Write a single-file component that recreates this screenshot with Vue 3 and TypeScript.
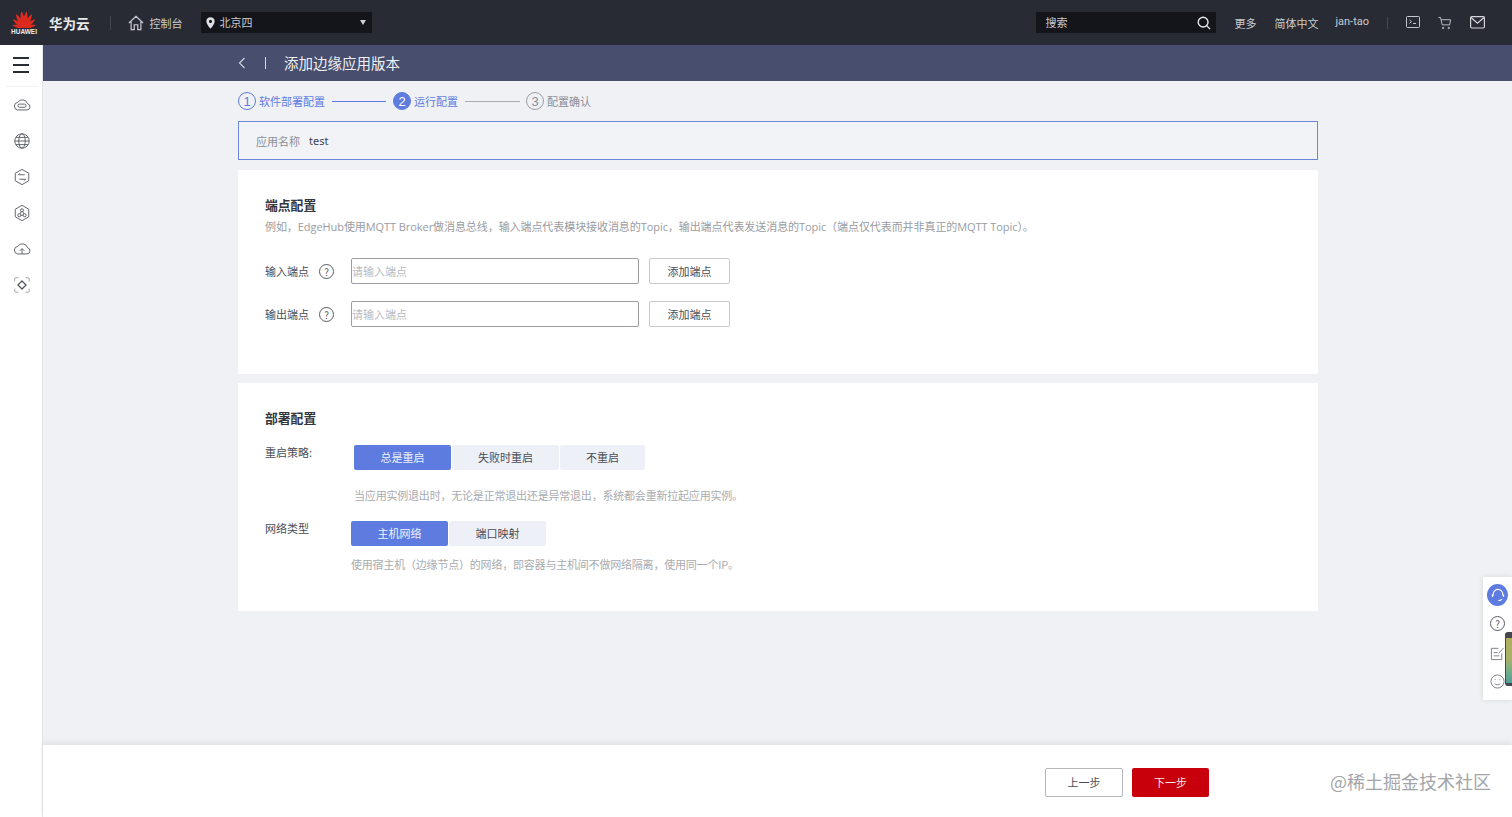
<template>
  <div class="page">
    <header class="top-bar">
      <div class="brand">
        <svg class="logo" viewBox="0 0 24 18" width="24" height="18">
          <path
            v-for="petal in petals"
            :key="petal.angle"
            fill="#dc2a1f"
            d="M12 18 C9.400 13 9.400 6 12 1 C14.600 6 14.600 13 12 18Z"
            :transform="`rotate(${petal.angle} 12 18) translate(12 18) scale(${petal.scale}) translate(-12 -18)`"
          />
        </svg>
        <span class="logo-text">HUAWEI</span>
      </div>
      <span class="brand-name">华为云</span>
      <span class="divider first"></span>
      <svg class="home" viewBox="0 0 18 18" width="16" height="16" fill="none" stroke="#cdcfd4" stroke-width="1.300">
        <path d="M1 9 9 1.500 17 9M3.500 7.500V16.500H7V11H11V16.500H14.500V7.500" />
      </svg>
      <span class="nav-text console">控制台</span>
      <div class="region">
        <svg viewBox="0 0 10 13" width="9" height="12">
          <path fill="#dfe0e3" fill-rule="evenodd" d="M5 0a4.600 4.600 0 0 1 4.600 4.600C9.600 8 5 13 5 13S.4 8 .4 4.600A4.600 4.600 0 0 1 5 0Zm0 3a1.700 1.700 0 1 0 0 3.400A1.700 1.700 0 0 0 5 3Z" />
        </svg>
        <span>北京四</span>
        <i class="caret"></i>
      </div>
      <div class="spacer"></div>
      <div class="search">
        <span>搜索</span>
        <svg viewBox="0 0 16 16" width="14" height="14" fill="none" stroke="#e8e8e8" stroke-width="1.600">
          <circle cx="7" cy="7" r="5.600" />
          <path d="m11 11 4 4" />
        </svg>
      </div>
      <span class="nav-text more">更多</span>
      <span class="nav-text lang">简体中文</span>
      <span class="nav-text user">jan-tao</span>
      <span class="divider second"></span>
      <svg class="tool" viewBox="0 0 14 13" width="14" height="13" fill="none" stroke="#c4c6cc">
        <rect x=".5" y=".5" width="13" height="11" rx="1" />
        <path d="m3.500 4 2 1.700-2 1.700M7 7.500h3" />
      </svg>
      <svg class="tool" viewBox="0 0 15 14" width="14" height="14" fill="none" stroke="#c4c6cc">
        <path d="M.5 1h2.200l1.800 8h8l1-5.500H3.400" />
        <circle cx="5.500" cy="12.300" r=".8" />
        <circle cx="11.500" cy="12.300" r=".8" />
      </svg>
      <svg class="tool" viewBox="0 0 15 13" width="15" height="13" fill="none" stroke="#d4d5d9" stroke-width="1.200">
        <rect x=".6" y=".6" width="13.800" height="11.400" rx="1.200" />
        <path d="m1 1.500 6.500 5.600L14 1.500" />
      </svg>
    </header>

    <div class="body">
      <aside class="side">
        <div class="burger"><i></i><i></i><i></i></div>
        <div class="side-icons">
          <svg viewBox="0 0 20 20" width="18" height="18" fill="none" stroke="#55585f">
            <path d="M5 15.500h10.500a3.500 3.500 0 0 0 .7-6.900A6 6 0 0 0 5.400 7 4.300 4.300 0 0 0 5 15.500Z" />
            <rect x="5.500" y="9" width="9" height="3.500" rx="1.700" />
          </svg>
          <svg viewBox="0 0 20 20" width="18" height="18" fill="none" stroke="#55585f">
            <circle cx="10" cy="10" r="8" />
            <ellipse cx="10" cy="10" rx="3.600" ry="8" />
            <path d="M2 10h16M3.200 6h13.600M3.200 14h13.600" />
          </svg>
          <svg viewBox="0 0 20 20" width="18" height="18" fill="none" stroke="#55585f">
            <path d="M10 1.500 17.500 5.800v8.400L10 18.500l-7.500-4.300V5.800Z" />
            <path d="M6 7.500h7M14 12.500H7M6 7.500l1.500-1.500M14 12.500l-1.500 1.500" />
          </svg>
          <svg viewBox="0 0 20 20" width="18" height="18" fill="none" stroke="#55585f">
            <path d="M10 1.500 17.500 5.800v8.400L10 18.500l-7.500-4.300V5.800Z" />
            <circle cx="10" cy="7" r="1.700" />
            <circle cx="7" cy="12.500" r="1.700" />
            <circle cx="13" cy="12.500" r="1.700" />
            <path d="M9.200 8.500 7.900 11M10.800 8.500l1.300 2.500M8.700 12.500h2.600" />
          </svg>
          <svg viewBox="0 0 20 20" width="18" height="18" fill="none" stroke="#55585f">
            <path d="M5 15.500h10.500a3.500 3.500 0 0 0 .7-6.900A6 6 0 0 0 5.400 7 4.300 4.300 0 0 0 5 15.500Z" />
            <path d="M10 15.500V10M7.500 12 10 9.500l2.500 2.500" />
          </svg>
          <svg viewBox="0 0 20 20" width="18" height="18" fill="none" stroke="#55585f">
            <path stroke="#9a9ca2" d="M2 6V3a1 1 0 0 1 1-1h3M14 2h3a1 1 0 0 1 1 1v3M18 14v3a1 1 0 0 1-1 1h-3M6 18H3a1 1 0 0 1-1-1v-3" />
            <path stroke-width="1.400" d="m10 5.500 4.500 4.500-4.500 4.500L5.500 10Z" />
          </svg>
        </div>
      </aside>

      <main class="main">
        <div class="sub-bar">
          <svg viewBox="0 0 8 12" width="8" height="12" fill="none" stroke="#d5d8e4" stroke-width="1.100">
            <path d="M6.500 1 1.500 6l5 5" />
          </svg>
          <span class="sub-line"></span>
          <span class="sub-title">添加边缘应用版本</span>
        </div>

        <div class="content">
          <div class="steps">
            <div class="step done"><b>1</b><span>软件部署配置</span></div>
            <i class="step-line on"></i>
            <div class="step current"><b>2</b><span>运行配置</span></div>
            <i class="step-line off"></i>
            <div class="step todo"><b>3</b><span>配置确认</span></div>
          </div>

          <div class="app-name">
            <span class="app-label">应用名称</span>
            <span class="app-value">test</span>
          </div>

          <section class="card endpoint-card">
            <h3>端点配置</h3>
            <p class="desc">例如，EdgeHub使用MQTT Broker做消息总线，输入端点代表模块接收消息的Topic，输出端点代表发送消息的Topic（端点仅代表而并非真正的MQTT Topic）。</p>
            <div v-for="row in endpointRows" :key="row" class="endpoint-row">
              <span class="row-label">{{ row }}</span>
              <span class="help">?</span>
              <div class="fake-input">请输入端点</div>
              <button class="add-btn">添加端点</button>
            </div>
          </section>

          <section class="card deploy-card">
            <h3>部署配置</h3>
            <div class="option-row restart">
              <span class="option-label">重启策略:</span>
              <div class="option-body">
                <div class="segments">
                  <button v-for="(item, i) in restartOptions" :key="item.text" :class="['seg', { active: i === 0 }]" :style="{ width: item.width + 'px' }">{{ item.text }}</button>
                </div>
                <p class="hint">当应用实例退出时，无论是正常退出还是异常退出，系统都会重新拉起应用实例。</p>
              </div>
            </div>
            <div class="option-row network">
              <span class="option-label">网络类型</span>
              <div class="option-body">
                <div class="segments">
                  <button v-for="(item, i) in networkOptions" :key="item.text" :class="['seg', { active: i === 0 }]" :style="{ width: item.width + 'px' }">{{ item.text }}</button>
                </div>
                <p class="hint">使用宿主机（边缘节点）的网络，即容器与主机间不做网络隔离，使用同一个IP。</p>
              </div>
            </div>
          </section>
        </div>

        <footer class="footer">
          <button class="btn prev">上一步</button>
          <button class="btn next">下一步</button>
          <span class="watermark">@稀土掘金技术社区</span>
        </footer>
      </main>
    </div>

    <div class="float-panel">
      <span class="support">
        <svg viewBox="0 0 20 20" width="16" height="16" fill="none" stroke="#fff" stroke-width="1.400">
          <path d="M4 11V9a6 6 0 0 1 12 0v2M3 9.500v3M17 9.500v3M15 15c-1 1.500-2.500 2-4.500 2" />
        </svg>
      </span>
      <span class="float-help">?</span>
      <svg class="float-doc" viewBox="0 0 16 16" width="15" height="15" fill="none" stroke="#7c7e84">
        <path d="M12.500 8v6.500h-11v-12H9M4 7h4M4 10.500h6M9 8l5.500-6" />
      </svg>
      <svg class="float-smile" viewBox="0 0 16 16" width="15" height="15" fill="none" stroke="#7c7e84">
        <circle cx="8" cy="8" r="7" />
        <path d="M5 6h1M10 6h1M5 10.500c1.500 1.400 4.500 1.400 6 0" />
      </svg>
    </div>
    <div class="meter"><i></i></div>
  </div>
</template>

<script setup lang="ts">
interface SegmentOption {
  text: string
  width: number
}

interface Petal {
  angle: number
  scale: number
}

const petals: Petal[] = [
  { angle: -76, scale: 0.72 },
  { angle: -52, scale: 0.84 },
  { angle: -30, scale: 0.95 },
  { angle: -9, scale: 1 },
  { angle: 9, scale: 1 },
  { angle: 30, scale: 0.95 },
  { angle: 52, scale: 0.84 },
  { angle: 76, scale: 0.72 }
]

const endpointRows = ['输入端点', '输出端点']

const restartOptions: SegmentOption[] = [
  { text: '总是重启', width: 97 },
  { text: '失败时重启', width: 107 },
  { text: '不重启', width: 85 }
]

const networkOptions: SegmentOption[] = [
  { text: '主机网络', width: 97 },
  { text: '端口映射', width: 97 }
]
</script>

<style>
html,
body {
  margin: 0;
  overflow: hidden;
}
</style>

<style scoped>
.page {
  position: relative;
  display: flex;
  flex-direction: column;
  height: 817px;
  overflow: hidden;
  font-family: "Noto Sans CJK SC", "Noto Sans", sans-serif;
  font-size: 11px;
  color: #252b3a;
  background: #eff1f4;
}

/* 顶部导航 */
.top-bar {
  display: flex;
  align-items: center;
  flex: none;
  height: 45px;
  background: #282b33;
  color: #c9cbd0;
}

.brand {
  display: flex;
  flex-direction: column;
  align-items: center;
  width: 24px;
  margin-left: 12px;
}

.logo {
  display: block;
}

.logo-text {
  font-family: "Liberation Sans", sans-serif;
  font-size: 6.500px;
  line-height: 8px;
  font-weight: 700;
  color: #eee;
  white-space: nowrap;
}

.brand-name {
  margin-left: 13px;
  font-size: 13.500px;
  font-weight: 700;
  color: #e8e9eb;
}

.divider {
  width: 1px;
  height: 14px;
  background: #44474f;
}

.divider.first {
  margin-left: 20px;
}

.home {
  margin-left: 17px;
}

.nav-text {
  white-space: nowrap;
}

.console {
  margin-left: 6px;
}

.region {
  display: flex;
  align-items: center;
  width: 171px;
  height: 21px;
  margin-left: 18px;
  padding-left: 5px;
  box-sizing: border-box;
  background: #14151a;
  color: #c9cbd0;
}

.region span {
  margin-left: 5px;
  margin-top: -2px;
}

.caret {
  width: 0;
  height: 0;
  margin-left: auto;
  margin-right: 6px;
  border-left: 3px solid transparent;
  border-right: 3px solid transparent;
  border-top: 5px solid #cfd0d3;
}

.spacer {
  flex: 1;
}

.search {
  display: flex;
  align-items: center;
  justify-content: space-between;
  width: 180px;
  height: 21px;
  padding: 0 5px 0 9px;
  box-sizing: border-box;
  background: #14151a;
  color: #c9cbd0;
}

.search span {
  margin-top: -2px;
}

.more {
  margin-left: 18px;
}

.lang {
  margin-left: 18px;
}

.user {
  margin-left: 17px;
  margin-top: -2px;
  font-family: "Roboto", sans-serif;
}

.divider.second {
  height: 12px;
  margin-left: 18px;
}

.tool {
  margin-left: 18px;
}

.tool:last-child {
  margin-right: 27px;
}

.body {
  display: flex;
  flex: 1;
  min-height: 0;
}

/* 侧边栏 */
.side {
  flex: none;
  width: 42px;
  border-right: 1px solid #e3e5e9;
  background: #fff;
}

.burger {
  display: flex;
  flex-direction: column;
  gap: 5px;
  height: 41px;
  padding: 12px 0 0 13px;
  box-sizing: border-box;
}

.burger i {
  width: 16px;
  height: 2px;
  background: #2a2c33;
}

.side-icons {
  display: flex;
  flex-direction: column;
  align-items: center;
  gap: 18px;
  padding-top: 9px;
  border-top: 1px solid #f0f1f3;
  margin: 0 4px 0 6px;
}

/* 副标题栏 */
.main {
  display: flex;
  flex-direction: column;
  flex: 1;
  min-width: 0;
}

.sub-bar {
  display: flex;
  align-items: center;
  flex: none;
  height: 36px;
  padding-left: 195px;
  background: #474e6e;
}

.sub-line {
  width: 1px;
  height: 12px;
  margin-left: 19px;
  background: #d5d8e4;
}

.sub-title {
  margin-left: 18px;
  margin-top: -2px;
  font-size: 14.500px;
  color: #f0f1f5;
}

.content {
  flex: 1;
  min-height: 0;
  width: 1080px;
  margin-left: 195px;
}

/* 步骤条 */
.steps {
  display: flex;
  align-items: center;
  height: 40px;
}

.step {
  display: flex;
  align-items: center;
  gap: 3px;
  font-size: 11px;
}

.step b {
  display: flex;
  align-items: center;
  justify-content: center;
  width: 18px;
  height: 18px;
  box-sizing: border-box;
  border-radius: 50%;
  border: 1px solid #5e7ce0;
  font-family: "Liberation Sans", sans-serif;
  font-size: 13px;
  font-weight: 400;
}

.done,
.current {
  color: #5e7ce0;
}

.current b {
  background: #5e7ce0;
  color: #fff;
}

.todo {
  color: #8a8e99;
}

.todo b {
  border-color: #9a9da5;
}

.step-line {
  height: 1px;
}

.step-line.on {
  width: 54px;
  margin: 0 7px;
  background: #5e7ce0;
}

.step-line.off {
  width: 55px;
  margin: 0 6px 0 7px;
  background: #a9acb3;
}

.app-name {
  display: flex;
  align-items: center;
  height: 39px;
  padding-left: 17px;
  box-sizing: border-box;
  border: 1px solid #6d87d8;
  background: #f1f3f6;
}

.app-label {
  color: #8a8e99;
}

.app-value {
  margin-left: 9px;
  font-family: "Noto Sans", sans-serif;
  color: #3e4350;
}

/* 卡片 */
.card {
  padding: 0 27px;
  background: #fff;
}

.card h3 {
  margin: -1px 0 0;
  font-size: 12.800px;
  line-height: 18px;
  font-weight: 700;
  color: #33363d;
}

.endpoint-card {
  height: 204px;
  margin-top: 10px;
  padding-top: 27px;
  box-sizing: border-box;
}

.desc {
  margin: 4px 0 0;
  font-family: "Open Sans", "Noto Sans CJK SC", sans-serif;
  font-size: 11px;
  line-height: 18px;
  letter-spacing: -0.07px;
  color: #9a9ca2;
  white-space: nowrap;
}

.endpoint-row {
  display: flex;
  align-items: center;
  height: 26px;
  margin-top: 17px;
}

.desc + .endpoint-row {
  margin-top: 22px;
}

.row-label {
  width: 54px;
  color: #4a4d55;
}

.help,
.float-help {
  display: flex;
  align-items: center;
  justify-content: center;
  width: 15px;
  height: 15px;
  box-sizing: border-box;
  border: 1.500px solid #5a5d65;
  border-radius: 50%;
  font-size: 10px;
  color: #5a5d65;
}

.fake-input {
  display: flex;
  align-items: center;
  width: 288px;
  height: 26px;
  margin-left: 17px;
  box-sizing: border-box;
  border: 1px solid #9b9da3;
  border-radius: 2px;
  color: #b9bbc0;
}

.add-btn {
  width: 81px;
  height: 26px;
  margin-left: 10px;
  padding: 0;
  border: 1px solid #c9cbd0;
  border-radius: 2px;
  background: #fff;
  font-family: inherit;
  font-size: 11px;
  color: #4a4d55;
}

.deploy-card {
  height: 228px;
  margin-top: 9px;
  padding-top: 27px;
  box-sizing: border-box;
}

.option-row {
  display: flex;
}

.restart {
  margin-top: 18px;
}

.network {
  margin-top: 18px;
}

.option-label {
  flex: none;
  margin-top: -1px;
  line-height: 16px;
  color: #4a4d55;
}

.option-body {
  margin-left: 42px;
}

.segments {
  display: flex;
  gap: 1px;
}

.seg {
  height: 25px;
  padding: 0 0 2px;
  border: 0;
  border-radius: 2px;
  background: #eef0f7;
  font-family: inherit;
  font-size: 11px;
  color: #4a4d55;
}

.seg.active {
  background: #5e7ce0;
  color: #eef1fb;
}

.hint {
  margin: 17px 0 0;
  line-height: 16px;
  letter-spacing: -0.2px;
  color: #a9abb0;
  white-space: nowrap;
}

.network .hint {
  margin-top: 10px;
}

/* 底部按钮 */
.footer {
  position: relative;
  display: flex;
  align-items: center;
  flex: none;
  height: 72px;
  padding: 2px 0 0 1002px;
  box-sizing: border-box;
  background: #fff;
  box-shadow: 0 -3px 5px rgba(40, 45, 60, 0.07);
}

.btn {
  height: 29px;
  padding: 0;
  border-radius: 2px;
  font-family: inherit;
  font-size: 11px;
}

.prev {
  width: 78px;
  border: 1px solid #b5b7bc;
  background: #fff;
  color: #4a4d55;
}

.next {
  width: 77px;
  margin-left: 9px;
  border: 0;
  background: #c7000b;
  color: #f7e5e6;
}

.watermark {
  position: absolute;
  right: 21px;
  top: 23px;
  font-size: 18px;
  line-height: 26px;
  color: #a3a5a9;
  white-space: nowrap;
}

/* 右侧浮动工具 */
.float-panel {
  position: absolute;
  right: 0;
  top: 577px;
  display: flex;
  flex-direction: column;
  align-items: center;
  width: 29px;
  height: 123px;
  padding-top: 7px;
  box-sizing: border-box;
  background: #fff;
  box-shadow: 0 0 5px rgba(40, 45, 60, 0.12);
}

.support {
  display: flex;
  align-items: center;
  justify-content: center;
  width: 21px;
  height: 22px;
  border-radius: 50%;
  background: #5e7ce0;
}

.float-help {
  margin-top: 10px;
}

.float-doc {
  margin-top: 15px;
}

.float-smile {
  margin-top: 13px;
}

.meter {
  position: absolute;
  right: 0;
  top: 632px;
  width: 7px;
  height: 54px;
  padding: 6px 0 3px 1px;
  box-sizing: border-box;
  border-radius: 3px 0 0 3px;
  background: #45474f;
}

.meter i {
  display: block;
  height: 100%;
  background: linear-gradient(#b2ae5f, #a9b267 45%, #74ad8a 75%, #4f9f97);
}
</style>
